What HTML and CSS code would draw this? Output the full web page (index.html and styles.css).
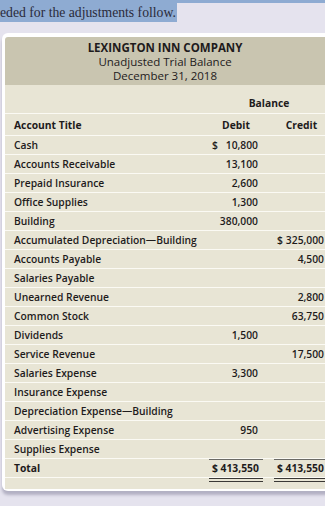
FILE: index.html
```html
<!DOCTYPE html>
<html>
<head>
<meta charset="utf-8">
<link rel="stylesheet" href="styles.css">
</head>
<body>
<div class="prev-line"></div>
<p class="intro"><span class="hl">eded for the adjustments follow.</span></p>
<div class="card">
  <div class="head">
    <div class="co">LEXINGTON INN COMPANY</div>
    <div>Unadjusted Trial Balance</div>
    <div>December 31, 2018</div>
  </div>
  <div class="tbl">
    <div class="row bal"><span></span><span class="span2">Balance</span></div>
    <div class="row th"><span>Account Title</span><span class="c">Debit</span><span class="c">Credit</span></div>
    <div class="row"><span>Cash</span><span class="n sp"><i>$</i>10,800</span><span></span></div>
    <div class="row"><span>Accounts Receivable</span><span class="n">13,100</span><span></span></div>
    <div class="row"><span>Prepaid Insurance</span><span class="n">2,600</span><span></span></div>
    <div class="row"><span>Office Supplies</span><span class="n">1,300</span><span></span></div>
    <div class="row"><span>Building</span><span class="n">380,000</span><span></span></div>
    <div class="row"><span>Accumulated Depreciation—Building</span><span></span><span class="n sp"><i>$</i>325,000</span></div>
    <div class="row"><span>Accounts Payable</span><span></span><span class="n">4,500</span></div>
    <div class="row"><span>Salaries Payable</span><span></span><span></span></div>
    <div class="row"><span>Unearned Revenue</span><span></span><span class="n">2,800</span></div>
    <div class="row"><span>Common Stock</span><span></span><span class="n">63,750</span></div>
    <div class="row"><span>Dividends</span><span class="n">1,500</span><span></span></div>
    <div class="row"><span>Service Revenue</span><span></span><span class="n">17,500</span></div>
    <div class="row"><span>Salaries Expense</span><span class="n">3,300</span><span></span></div>
    <div class="row"><span>Insurance Expense</span><span></span><span></span></div>
    <div class="row"><span>Depreciation Expense—Building</span><span></span><span></span></div>
    <div class="row"><span>Advertising Expense</span><span class="n">950</span><span></span></div>
    <div class="row"><span>Supplies Expense</span><span></span><span></span></div>
    <div class="row total"><span>Total</span><span class="n sp tot">$ 413,550</span><span class="n sp tot">$ 413,550</span></div>
    <div class="row end"></div>
  </div>
</div>
</body>
</html>
```

FILE: styles.css
```css
html, body {
  margin: 0;
  padding: 0;
  background: #e5e3ee;
  overflow: hidden;
  height: 506px;
}
.prev-line {
  height: 3px;
  background: #8eabd2;
}
.intro {
  margin: 0;
  height: 19px;
  font-family: "Liberation Serif", serif;
  font-size: 13.7px;
  line-height: 19px;
  color: #2a2a3a;
}
.hl {
  display: inline-block;
  background: #8eabd2;
  padding-right: 1px;
}
.card {
  margin: 11px 0 0 2px;
  width: 345px;
  background: #ffffff;
  border-radius: 6px;
  padding: 4px 0 2px 3px;
  box-shadow: 0 4px 3px #b3b1c3;
  font-family: "Open Sans", sans-serif;
  color: #1e1b1c;
}
.head {
  background: #c9c5b0;
  border-radius: 3px 0 0 0;
  padding: 4px 0 2px;
  font-size: 11.5px;
  line-height: 14px;
}
.head div {
  width: 320px;
  text-align: center;
}
.head .co {
  font-weight: 700;
}
.tbl {
  background: #e8e5d5;
  font-size: 10.3px;
  font-weight: 600;
}
.row {
  display: grid;
  grid-template-columns: 184px 54px 55px;
  column-gap: 11px;
  height: 18px;
  align-items: center;
  border-top: 1px solid #fbfaf4;
  padding-left: 9px;
  white-space: nowrap;
}
.row.bal {
  border-top: none;
  height: 28px;
  align-items: end;
  padding-bottom: 3px;
  box-sizing: border-box;
  font-weight: 700;
}
.row.bal .span2 {
  grid-column: 2 / span 2;
  text-align: center;
}
.row.th {
  height: 21px;
  font-weight: 700;
}
.c {
  text-align: center;
}
.n {
  text-align: right;
  padding-right: 5px;
}
.sp {
  display: flex;
  justify-content: space-between;
  padding-left: 3px;
}
.sp i {
  font-style: normal;
}
.row.total {
  font-weight: 700;
  position: relative;
  z-index: 1;
}
.tot {
  align-self: start;
  align-items: center;
  border-top: 1px solid #6b6a66;
  border-bottom: 4px double #3a3835;
  padding-bottom: 2px;
  margin-bottom: -5px;
  box-sizing: border-box;
  height: 23px;
}
.row.end {
  height: 11px;
}
```
